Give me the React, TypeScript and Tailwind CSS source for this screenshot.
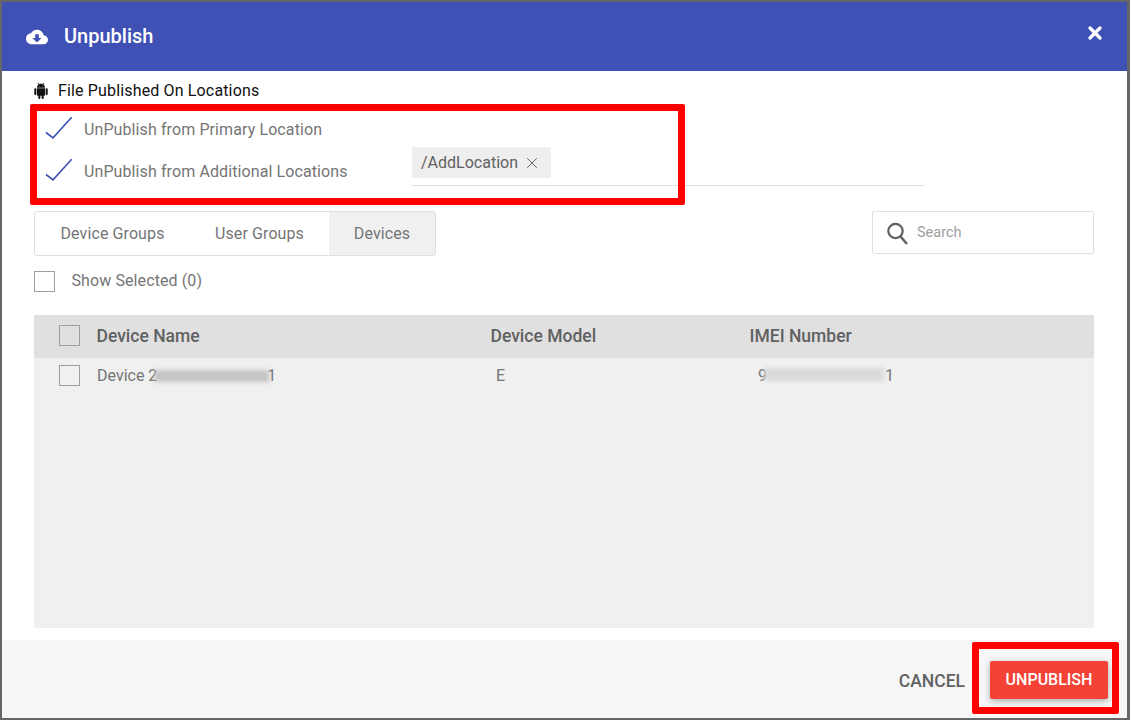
import { X } from "lucide-react";

function Check() {
  return (
    <svg width="28" height="24" viewBox="0 0 28 24" fill="none" className="-mt-[4.5px] shrink-0 overflow-visible">
      <path d="M0 16.5 L7 21.8 L25.7 1.2" stroke="#3f51b5" strokeWidth="1.6" />
    </svg>
  );
}

function Box({ className = "" }: { className?: string }) {
  return <div className={`w-[21px] h-[21px] border border-[#9e9e9e] shrink-0 ${className}`} />;
}

export default function App() {
  return (
    <div className="relative h-[720px] w-[1130px] overflow-hidden bg-[#666666] pt-[2px] pr-[3px] pb-[2px] pl-[2px] font-['Roboto',sans-serif]">
      <div className="flex h-full flex-col bg-white">
        {/* Header */}
        <header className="flex h-[69px] shrink-0 items-center bg-[#3f51b5] pl-[24px] pr-[22px] text-white">
          <svg width="22" height="22" viewBox="0 0 24 24" fill="currentColor" className="mr-[16px]">
            <path d="M19.35 10.04C18.67 6.59 15.64 4 12 4 9.11 4 6.6 5.64 5.35 8.04 2.34 8.36 0 10.91 0 14c0 3.31 2.69 6 6 6h13c2.76 0 5-2.24 5-5 0-2.64-2.05-4.78-4.65-4.96zM17 13l-5 5-5-5h3V9h4v4h3z" />
          </svg>
          <h1 className="-mt-[2px] text-[20px] font-medium">Unpublish</h1>
          <div className="flex-1" />
          <X size={20} strokeWidth={4} className="-mt-[8px]" />
        </header>

        <div className="flex flex-1 flex-col pl-[32px] pr-[33px]">
          {/* Locations */}
          <div className="flex h-[38px] items-center gap-[9px] pt-[1px] text-[16px] tracking-[0.15px] text-[#111111]">
            <svg width="16" height="16" viewBox="0 0 24 24" fill="currentColor" className="-ml-[1px]">
              <path d="M6 18c0 .55.45 1 1 1h1v3.5c0 .83.67 1.5 1.5 1.5s1.5-.67 1.5-1.5V19h2v3.5c0 .83.67 1.5 1.5 1.5s1.5-.67 1.5-1.5V19h1c.55 0 1-.45 1-1V8H6v10zM3.5 8C2.67 8 2 8.67 2 9.5v7c0 .83.67 1.5 1.5 1.5S5 17.33 5 16.5v-7C5 8.67 4.33 8 3.5 8zm17 0c-.83 0-1.5.67-1.5 1.5v7c0 .83.67 1.5 1.5 1.5s1.5-.67 1.5-1.5v-7c0-.83-.67-1.5-1.5-1.5zm-4.97-5.84l1.3-1.3c.2-.2.2-.51 0-.71-.2-.2-.51-.2-.71 0l-1.48 1.48C13.85 1.23 12.95 1 12 1c-.96 0-1.86.23-2.66.63L7.85.15c-.2-.2-.51-.2-.71 0-.2.2-.2.51 0 .71l1.31 1.31C6.97 3.26 6 5.01 6 7h12c0-1.99-.97-3.75-2.47-4.84zM10 5H9V4h1v1zm5 0h-1V4h1v1z" />
            </svg>
            File Published On Locations
          </div>

          <div className="flex h-[34px] items-center pl-[12px] pt-[8px] text-[16px] tracking-[0.1px] text-[#757575]">
            <Check />
            <span className="ml-[10px]">UnPublish from Primary Location</span>
          </div>

          <div className="mt-[2px] flex h-[42px] items-start">
            <div className="flex h-[42px] w-[378px] shrink-0 items-center pl-[12px] pt-[12px] text-[16px] tracking-[0.1px] text-[#757575]">
              <Check />
              <span className="ml-[10px]">UnPublish from Additional Locations</span>
            </div>
            <div className="mt-[1px] h-[40px] w-[512px] border-b border-[#e0e0e0]">
              <div className="mt-[1px] flex h-[31px] w-[139px] items-center rounded-[2px] bg-[#eeeeee] pl-[9px] text-[16px] text-[#616161]">
                /AddLocation
                <X size={18} strokeWidth={1.3} className="ml-[5px] mt-[1px]" />
              </div>
            </div>
          </div>

          {/* Tabs and search */}
          <div className="mt-[24px] flex items-start justify-between">
            <div className="flex h-[45px] w-[402px] overflow-hidden rounded-[3px] border border-[#e0e0e0] text-[16px] tracking-[0.1px] text-[#757575]">
              <div className="flex w-[155px] items-center justify-center">Device Groups</div>
              <div className="flex w-[139px] items-center justify-center">User Groups</div>
              <div className="flex flex-1 items-center justify-center bg-[#f0f0f0]">Devices</div>
            </div>
            <div className="flex h-[43px] w-[222px] items-center rounded-[2px] border border-[#e0e0e0] pl-[13px] text-[14.5px] text-[#9e9e9e]">
              <svg width="24" height="30" viewBox="0 0 24 30" fill="none" stroke="#616161" className="shrink-0">
                <circle cx="9.5" cy="13" r="7.2" strokeWidth="2.2" />
                <path d="M14.5 18.5 L21 26" strokeWidth="2.6" />
              </svg>
              <span className="ml-[7px]">Search</span>
            </div>
          </div>

          {/* Show selected */}
          <div className="mt-[13px] flex items-center text-[16px] tracking-[0.1px] text-[#757575]">
            <Box />
            <span className="ml-[16.5px]">Show Selected (0)</span>
          </div>

          {/* Table */}
          <div className="mt-[22px] flex h-[313px] flex-col bg-[#f0f0f0]">
            <div className="flex h-[43px] shrink-0 items-center bg-[#e0e0e0] text-[17.5px] font-medium text-[#616161]">
              <Box className="-mt-[2px] ml-[25px]" />
              <span className="ml-[16.5px] w-[394px]">Device Name</span>
              <span className="w-[259px]">Device Model</span>
              <span>IMEI Number</span>
            </div>
            <div className="flex h-[34px] items-center text-[16px] text-[#757575]">
              <Box className="ml-[25px]" />
              <span className="relative ml-[17px] mt-[2px] w-[399px]">
                Device 2<span className="ml-[110px]">1</span>
                <span className="absolute left-[58px] top-[6px] h-[12px] w-[114px] bg-[#c4c4c4] blur-[2px]" />
              </span>
              <span className="mt-[2px] w-[254px]">E</span>
              <span className="relative ml-[8px] mt-[2px]">
                9<span className="ml-[118px]">1</span>
                <span className="absolute left-[6px] top-[4px] h-[13px] w-[120px] bg-[#dadada] blur-[2px]" />
              </span>
            </div>
          </div>
        </div>

        {/* Footer */}
        <footer className="flex h-[78px] shrink-0 items-center justify-end bg-[#f6f6f6] pr-[19px]">
          <span className="mr-[25px] mt-[4px] text-[17.5px] font-medium text-[#616161]">CANCEL</span>
          <button className="mt-[1px] h-[38px] w-[118px] rounded-[2px] bg-[#f44336] pt-[1px] text-[16px] font-medium text-white shadow-[0_2px_6px_rgba(0,0,0,0.3)]">
            UNPUBLISH
          </button>
        </footer>
      </div>

      {/* Red annotation boxes */}
      <div className="absolute left-[30px] top-[104px] h-[101px] w-[655px] rounded-[2px] border-[7px] border-[#ff0000]" />
      <div className="absolute left-[972px] top-[642px] h-[72px] w-[147px] rounded-[2px] border-[7px] border-[#ff0000]" />
    </div>
  );
}
